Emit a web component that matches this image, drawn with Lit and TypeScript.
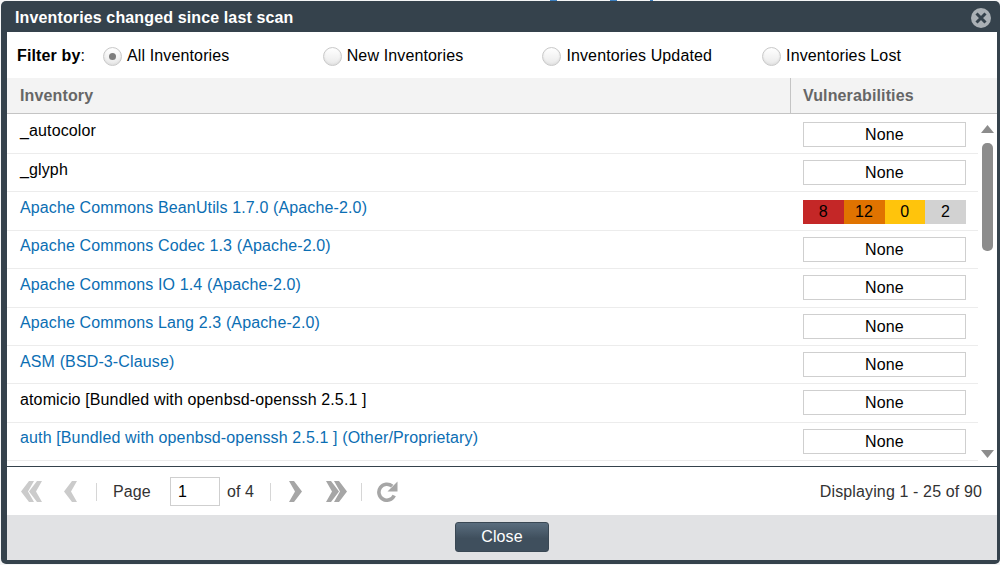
import { LitElement, html, css, svg } from "lit";
import { customElement } from "lit/decorators.js";

type Row = { name: string; link: boolean; bars?: number[] };
const rows: Row[] = [
  { name: "_autocolor", link: false },
  { name: "_glyph", link: false },
  { name: "Apache Commons BeanUtils 1.7.0 (Apache-2.0)", link: true, bars: [8, 12, 0, 2] },
  { name: "Apache Commons Codec 1.3 (Apache-2.0)", link: true },
  { name: "Apache Commons IO 1.4 (Apache-2.0)", link: true },
  { name: "Apache Commons Lang 2.3 (Apache-2.0)", link: true },
  { name: "ASM (BSD-3-Clause)", link: true },
  { name: "atomicio [Bundled with openbsd-openssh 2.5.1 ]", link: false },
  { name: "auth [Bundled with openbsd-openssh 2.5.1 ] (Other/Proprietary)", link: true },
];
const filters = ["All Inventories", "New Inventories", "Inventories Updated", "Inventories Lost"];

const chevL = (x: number, fill: string) =>
  svg`<polygon points="${x + 8},0 ${x + 13},0 ${x + 7},10.5 ${x + 13},21 ${x + 8},21 ${x},10.5" fill="${fill}"/>`;
const chevR = (x: number, fill: string) =>
  svg`<polygon points="${x},0 ${x + 5},0 ${x + 13},10.5 ${x + 5},21 ${x},21 ${x + 6},10.5" fill="${fill}"/>`;

@customElement("app-root")
export class AppRoot extends LitElement {
  static styles = css`
    :host {
      display: block;
      width: 1000px;
      height: 565px;
      box-sizing: border-box;
      padding: 1px 0 1px 1px;
      background:
        linear-gradient(#3a7fc0, #3a7fc0) 550px 0 / 7px 1px no-repeat,
        linear-gradient(#3a7fc0, #3a7fc0) 610px 0 / 7px 1px no-repeat,
        linear-gradient(#3a7fc0, #3a7fc0) 650px 0 / 3px 1px no-repeat,
        #f4f5f6;
      font-family: "Liberation Sans", Arial, sans-serif;
      font-size: 16px;
      letter-spacing: 0.13px;
      color: #000;
      overflow: hidden;
    }
    .modal {
      height: 563px;
      box-sizing: border-box;
      background: #35424c;
      border-radius: 5px;
      padding: 0 3px 4px 6px;
      display: flex;
      flex-direction: column;
    }
    .title {
      height: 31px;
      flex: none;
      display: flex;
      align-items: center;
      justify-content: space-between;
      color: #fff;
      font-weight: bold;
      padding: 3px 6px 0 8px;
      box-sizing: border-box;
    }
    .title svg { display: block; }
    .filter {
      height: 46px;
      flex: none;
      background: #fff;
      display: flex;
      align-items: center;
      padding: 2px 0 0 10px;
      box-sizing: border-box;
    }
    .filter-label { width: 86px; flex: none; }
    .filter-label b { font-weight: bold; }
    .opt { width: 219.7px; flex: none; display: flex; align-items: center; gap: 5px; }
    .radio {
      width: 19px;
      height: 19px;
      box-sizing: border-box;
      border-radius: 50%;
      border: 1px solid #c9c9c9;
      background: linear-gradient(#fff, #e9e9e9);
      box-shadow: inset 0 -1px 2px #ddd;
      display: flex;
      align-items: center;
      justify-content: center;
    }
    .radio.on::after {
      content: "";
      width: 7px;
      height: 7px;
      border-radius: 50%;
      background: #7d7d7d;
    }
    .thead {
      height: 36px;
      flex: none;
      box-sizing: border-box;
      background: #f3f3f3;
      border-bottom: 1px solid #c4c4c4;
      display: flex;
      color: #666;
      font-weight: bold;
    }
    .th1 { width: 784px; flex: none; box-sizing: border-box; padding: 9px 0 0 13px; border-right: 1px solid #c4c4c4; }
    .th2 { padding: 9px 0 0 12px; }
    .body {
      height: 352px;
      flex: none;
      background: #fff;
      display: flex;
      border-bottom: 1px solid #35424c;
    }
    .list { width: 971px; flex: none; padding-top: 1.6px; box-sizing: border-box; }
    .row {
      height: 38.4px;
      box-sizing: border-box;
      border-bottom: 1px solid #ececec;
      display: flex;
      padding-top: 6.6px;
    }
    .name { width: 796px; flex: none; padding-left: 13px; box-sizing: border-box; line-height: 18px; }
    .link { color: #0b6eb3; }
    .none {
      width: 163px;
      height: 25px;
      margin-top: -0.5px;
      box-sizing: border-box;
      border: 1px solid #cfcfcf;
      text-align: center;
      line-height: 23px;
    }
    .bars { width: 163px; height: 24px; display: flex; margin-top: 0.7px; }
    .bars span { flex: 1; text-align: center; line-height: 24px; }
    .b0 { background: #c42727; }
    .b1 { background: #e07300; }
    .b2 { background: #ffc40c; }
    .b3 { background: #d2d2d2; }
    .scroll {
      flex: 1;
      display: flex;
      flex-direction: column;
      align-items: center;
      padding: 11px 0 8px;
      box-sizing: border-box;
    }
    .thumb {
      width: 11px;
      height: 108px;
      background: #8c8c8c;
      border-radius: 5px;
      margin-top: 10px;
      margin-bottom: auto;
    }
    .tri-up, .tri-down { width: 13px; height: 8px; display: block; }
    .toolbar {
      height: 48px;
      flex: none;
      background: #fff;
      display: flex;
      align-items: center;
      color: #333;
      box-sizing: border-box;
      padding: 1px 0 0 14px;
    }
    .toolbar svg { display: block; flex: none; }
    .sep { width: 1px; height: 18px; background: #d6d6d6; flex: none; }
    .page-input {
      width: 50px;
      height: 29px;
      box-sizing: border-box;
      border: 1px solid #cfcfcf;
      padding-left: 7px;
      line-height: 27px;
      color: #000;
      margin: 0 7px 0 19px;
      flex: none;
    }
    .display { margin-left: auto; padding-right: 15px; }
    .footer {
      flex: 1;
      background: #e1e2e4;
      display: flex;
      align-items: flex-start;
      justify-content: center;
      padding-top: 7px;
      box-sizing: border-box;
    }
    .close {
      width: 94px;
      height: 30px;
      box-sizing: border-box;
      border: 1px solid #3a4854;
      border-radius: 3px;
      background: linear-gradient(#5a6d7e, #3f4f5d 55%);
      color: #fff;
      text-align: center;
      line-height: 28px;
    }
  `;

  render() {
    return html`
      <div class="modal">
        <div class="title">
          <span>Inventories changed since last scan</span>
          <svg width="20" height="20" viewBox="0 0 20 20">
            <circle cx="10" cy="10" r="10" fill="#aab0b5"/>
            <path d="M5.5 5.5L14.5 14.5M14.5 5.5L5.5 14.5" stroke="#35424c" stroke-width="3" fill="none"/>
          </svg>
        </div>
        <div class="filter">
          <div class="filter-label"><b>Filter by</b>:</div>
          ${filters.map(
            (f, i) => html`<div class="opt"><span class="radio ${i === 0 ? "on" : ""}"></span><span>${f}</span></div>`
          )}
        </div>
        <div class="thead">
          <div class="th1">Inventory</div>
          <div class="th2">Vulnerabilities</div>
        </div>
        <div class="body">
          <div class="list">
            ${rows.map(
              (r) => html`<div class="row">
                <div class="name ${r.link ? "link" : ""}">${r.name}</div>
                ${r.bars
                  ? html`<div class="bars">${r.bars.map((b, i) => html`<span class="b${i}">${b}</span>`)}</div>`
                  : html`<div class="none">None</div>`}
              </div>`
            )}
          </div>
          <div class="scroll">
            <svg class="tri-up" viewBox="0 0 13 8"><polygon points="6.5,0 13,8 0,8" fill="#8c8c8c"/></svg>
            <div class="thumb"></div>
            <svg class="tri-down" viewBox="0 0 13 8"><polygon points="0,0 13,0 6.5,8" fill="#8c8c8c"/></svg>
          </div>
        </div>
        <div class="toolbar">
          <svg width="21" height="21" viewBox="0 0 21 21">${chevL(0, "#cbcbcb")}${chevL(8, "#cbcbcb")}</svg>
          <svg style="margin-left:22px" width="13" height="21" viewBox="0 0 13 21">${chevL(0, "#cbcbcb")}</svg>
          <span class="sep" style="margin-left:19px"></span>
          <span style="margin-left:16px">Page</span>
          <div class="page-input">1</div>
          <span>of 4</span>
          <span class="sep" style="margin-left:16px"></span>
          <svg style="margin-left:18px" width="13" height="21" viewBox="0 0 13 21">${chevR(0, "#a6a6a6")}</svg>
          <svg style="margin-left:24px" width="21" height="21" viewBox="0 0 21 21">${chevR(0, "#a6a6a6")}${chevR(8, "#a6a6a6")}</svg>
          <span class="sep" style="margin-left:14px"></span>
          <svg style="margin-left:15px" width="21" height="21" viewBox="0 0 21 21">
            <path d="M17.2 14.5A8 8 0 1 1 15.2 5.2" fill="none" stroke="#a6a6a6" stroke-width="3.6"/>
            <polygon points="20.5,0.5 20.5,10.5 10.5,10.5" fill="#a6a6a6"/>
          </svg>
          <span class="display">Displaying 1 - 25 of 90</span>
        </div>
        <div class="footer"><div class="close">Close</div></div>
      </div>
    `;
  }
}
